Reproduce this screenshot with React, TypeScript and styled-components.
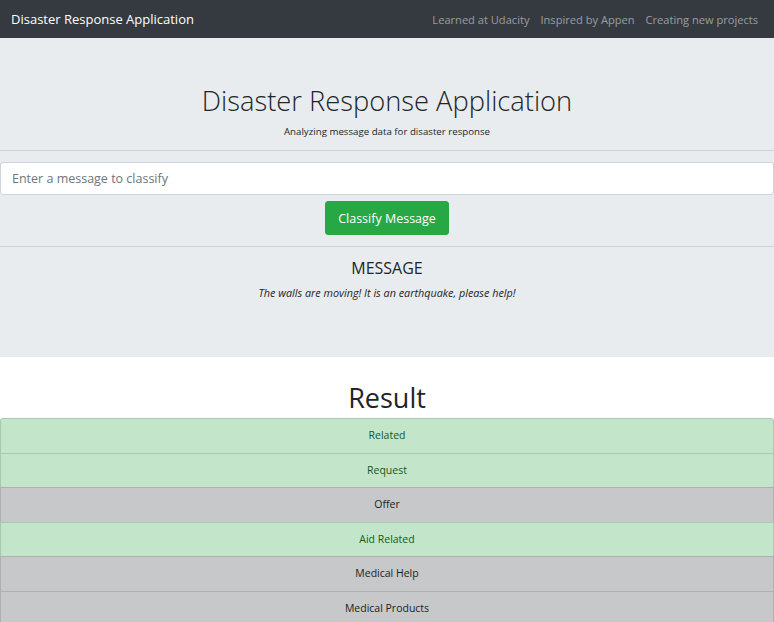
import React from 'react';
import styled, { createGlobalStyle } from 'styled-components';

const GlobalStyle = createGlobalStyle`
  body {
    margin: 0;
    background: #fff;
    color: #212529;
    font-family: "Open Sans", "Noto Sans", "Liberation Sans", sans-serif;
  }
`;

const Navbar = styled.nav`
  height: 38px;
  background: #343a40;
  display: flex;
  align-items: center;
  justify-content: space-between;
  padding: 0 16px 0 11px;
`;

const Brand = styled.a`
  color: #fff;
  font-size: 13px;
  text-decoration: none;
`;

const NavLinks = styled.div`
  display: flex;
  gap: 11px;
`;

const NavLink = styled.a`
  color: rgba(255, 255, 255, 0.5);
  font-size: 11.1px;
  text-decoration: none;
`;

const Jumbotron = styled.section`
  background: #e9ecef;
  height: 319px;
  box-sizing: border-box;
  padding-top: 46px;
  text-align: center;
`;

const Title = styled.h1`
  margin: 0;
  font-size: 27.3px;
  font-weight: 300;
  line-height: 34px;
`;

const Lead = styled.p`
  margin: 7px 0 0;
  font-size: 9.7px;
  line-height: 14px;
`;

const Divider = styled.hr<{ $top: number; $bottom: number }>`
  border: 0;
  border-top: 1px solid rgba(0, 0, 0, 0.1);
  margin: ${(p) => `${p.$top}px 0 ${p.$bottom}px`};
`;

const Input = styled.input`
  display: block;
  width: 100%;
  height: 33px;
  box-sizing: border-box;
  padding: 0 11px;
  font-family: inherit;
  font-size: 12.5px;
  color: #495057;
  background: #fff;
  border: 1px solid #ced4da;
  border-radius: 3px;

  &::placeholder {
    color: #6c757d;
  }
`;

const Button = styled.button`
  margin-top: 6px;
  height: 34px;
  padding: 0 12px;
  font-family: inherit;
  font-size: 12.5px;
  color: #fff;
  background: #28a745;
  border: 1px solid #28a745;
  border-radius: 3px;
`;

const MessageHeading = styled.h2`
  margin: 0;
  font-size: 16px;
  font-weight: 400;
  line-height: 20px;
`;

const MessageText = styled.p`
  margin: 8px 0 0;
  font-size: 10.8px;
  font-style: italic;
  line-height: 14px;
`;

const ResultHeading = styled.h1`
  margin: 24px 0 3px;
  text-align: center;
  font-size: 27px;
  font-weight: 400;
  line-height: 34px;
`;

const List = styled.ul`
  list-style: none;
  margin: 0;
  padding: 0;
`;

const Item = styled.li<{ $active: boolean }>`
  padding: 10px;
  font-size: 10.5px;
  line-height: 13.5px;
  text-align: center;
  margin-bottom: -1px;
  border: 1px solid rgba(0, 0, 0, 0.125);
  background: ${(p) => (p.$active ? '#c3e6cb' : '#c6c8ca')};
  color: ${(p) => (p.$active ? '#155724' : '#1b1e21')};

  &:first-child {
    border-top-left-radius: 3px;
    border-top-right-radius: 3px;
  }
`;

const results = [
  { name: 'Related', active: true },
  { name: 'Request', active: true },
  { name: 'Offer', active: false },
  { name: 'Aid Related', active: true },
  { name: 'Medical Help', active: false },
  { name: 'Medical Products', active: false },
  { name: 'Search And Rescue', active: false },
];

const App: React.FC = () => {
  return (
    <>
      <GlobalStyle />
      <Navbar>
        <Brand href="#">Disaster Response Application</Brand>
        <NavLinks>
          <NavLink href="#">Learned at Udacity</NavLink>
          <NavLink href="#">Inspired by Appen</NavLink>
          <NavLink href="#">Creating new projects</NavLink>
        </NavLinks>
      </Navbar>

      <Jumbotron>
        <Title>Disaster Response Application</Title>
        <Lead>Analyzing message data for disaster response</Lead>
        <Divider $top={11} $bottom={11} />
        <Input type="text" placeholder="Enter a message to classify" />
        <Button>Classify Message</Button>
        <Divider $top={11} $bottom={11} />
        <MessageHeading>MESSAGE</MessageHeading>
        <MessageText>The walls are moving! It is an earthquake, please help!</MessageText>
      </Jumbotron>

      <ResultHeading>Result</ResultHeading>
      <List>
        {results.map((r) => (
          <Item key={r.name} $active={r.active}>
            {r.name}
          </Item>
        ))}
      </List>
    </>
  );
};

export default App;
